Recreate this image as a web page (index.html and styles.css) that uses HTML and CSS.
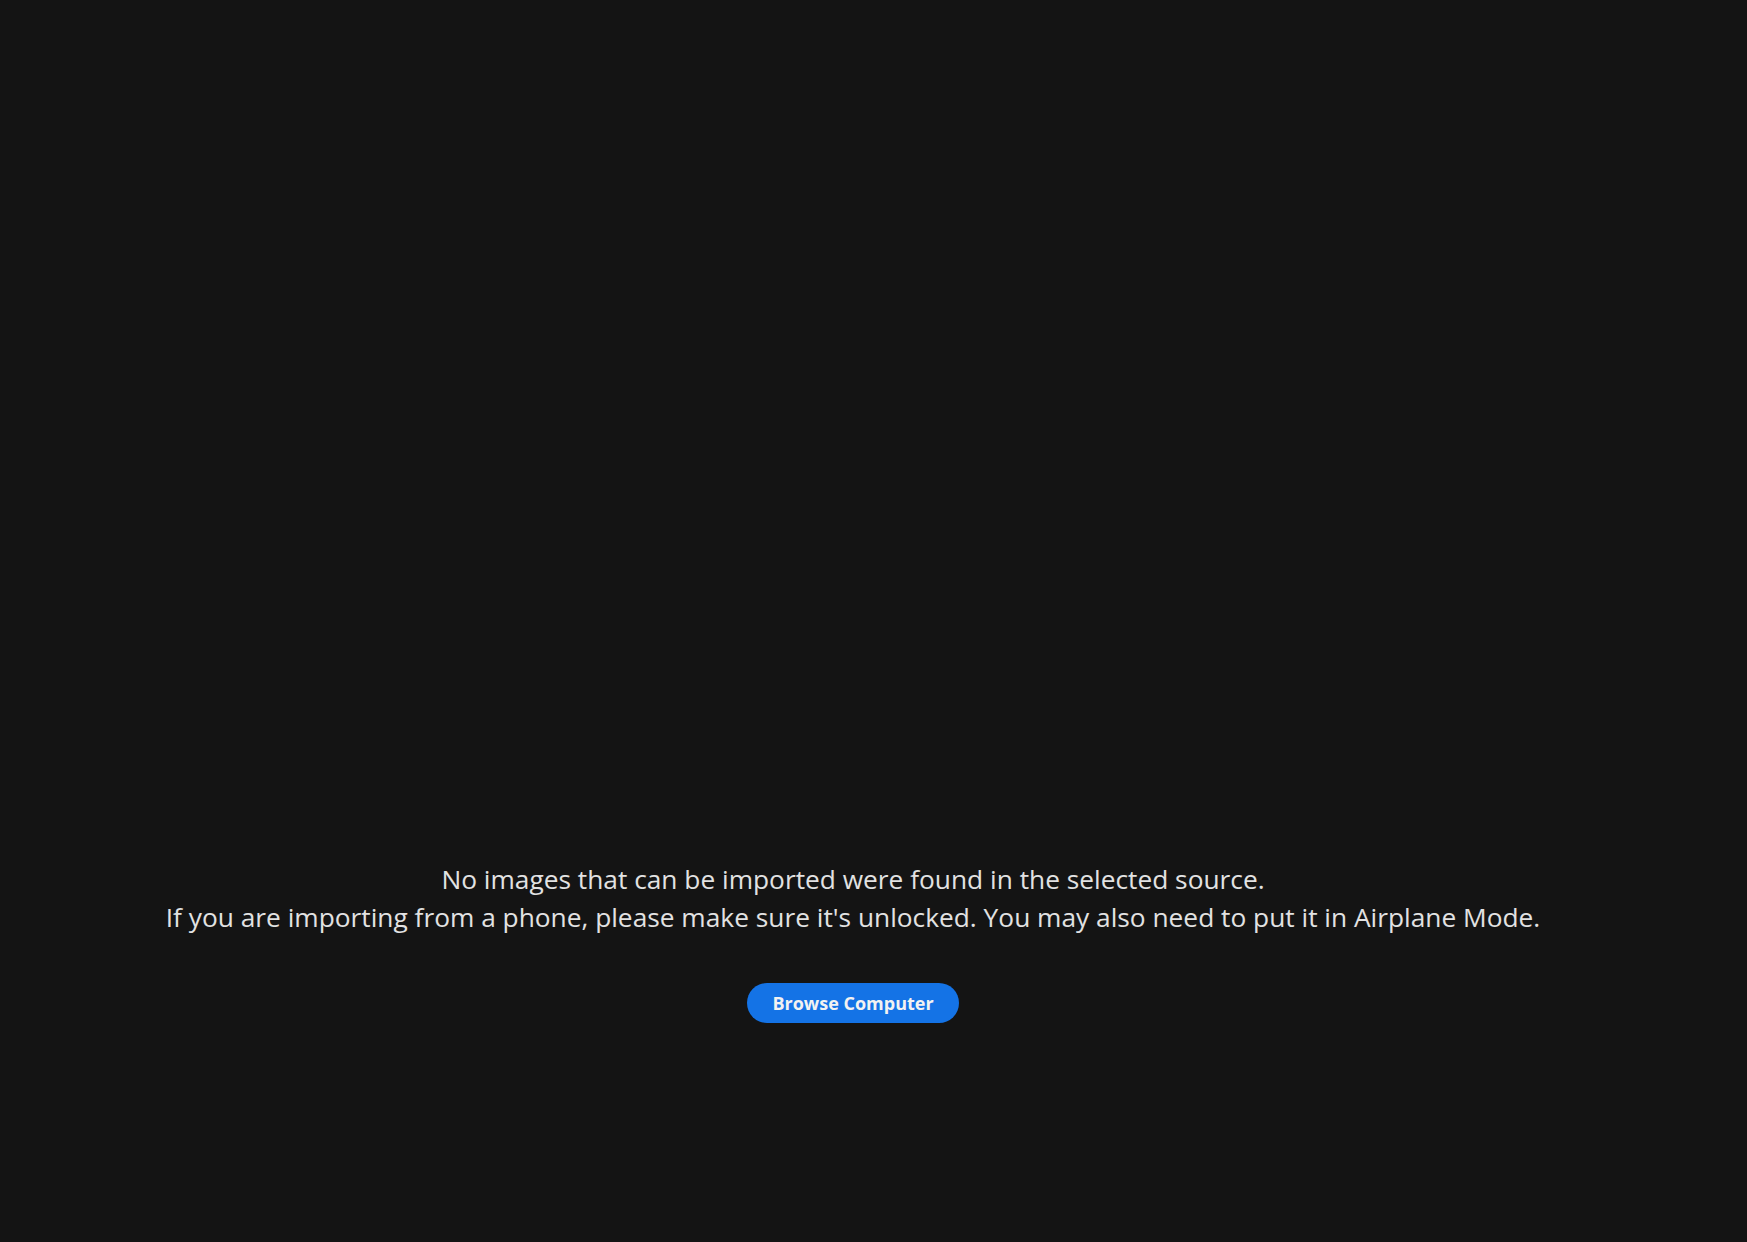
FILE: index.html
```html
<!DOCTYPE html>
<html lang="en">
<head>
<meta charset="utf-8">
<title>Import</title>
<link rel="stylesheet" href="styles.css">
</head>
<body>
<main class="empty-state">
  <div class="message">
    <p class="line">No images that can be imported were found in the selected source.</p>
    <p class="line">If you are importing from a phone, please make sure it's unlocked. You may also need to put it in Airplane Mode.</p>
  </div>
  <button class="browse-btn" type="button">Browse Computer</button>
</main>
</body>
</html>
```
FILE: styles.css
```css
html, body {
  margin: 0;
  padding: 0;
  height: 100%;
  background: #141414;
}
body {
  font-family: "Open Sans", "Noto Sans", sans-serif;
  color: #e2e2e2;
}
.empty-state {
  box-sizing: border-box;
  height: 100%;
  padding: 860px 41px 0 0;
  display: flex;
  flex-direction: column;
  align-items: center;
}
.message {
  text-align: center;
}
.line {
  margin: 0;
  font-size: 26.3px;
  line-height: 38px;
  white-space: nowrap;
}
.browse-btn {
  margin-top: 47px;
  height: 40px;
  padding: 0 25px;
  border: none;
  border-radius: 20px;
  background: #1473e6;
  color: #f2f2f2;
  font-family: "Open Sans", "Noto Sans", sans-serif;
  font-weight: 700;
  font-size: 18px;
  line-height: 40px;
  cursor: pointer;
}
```
